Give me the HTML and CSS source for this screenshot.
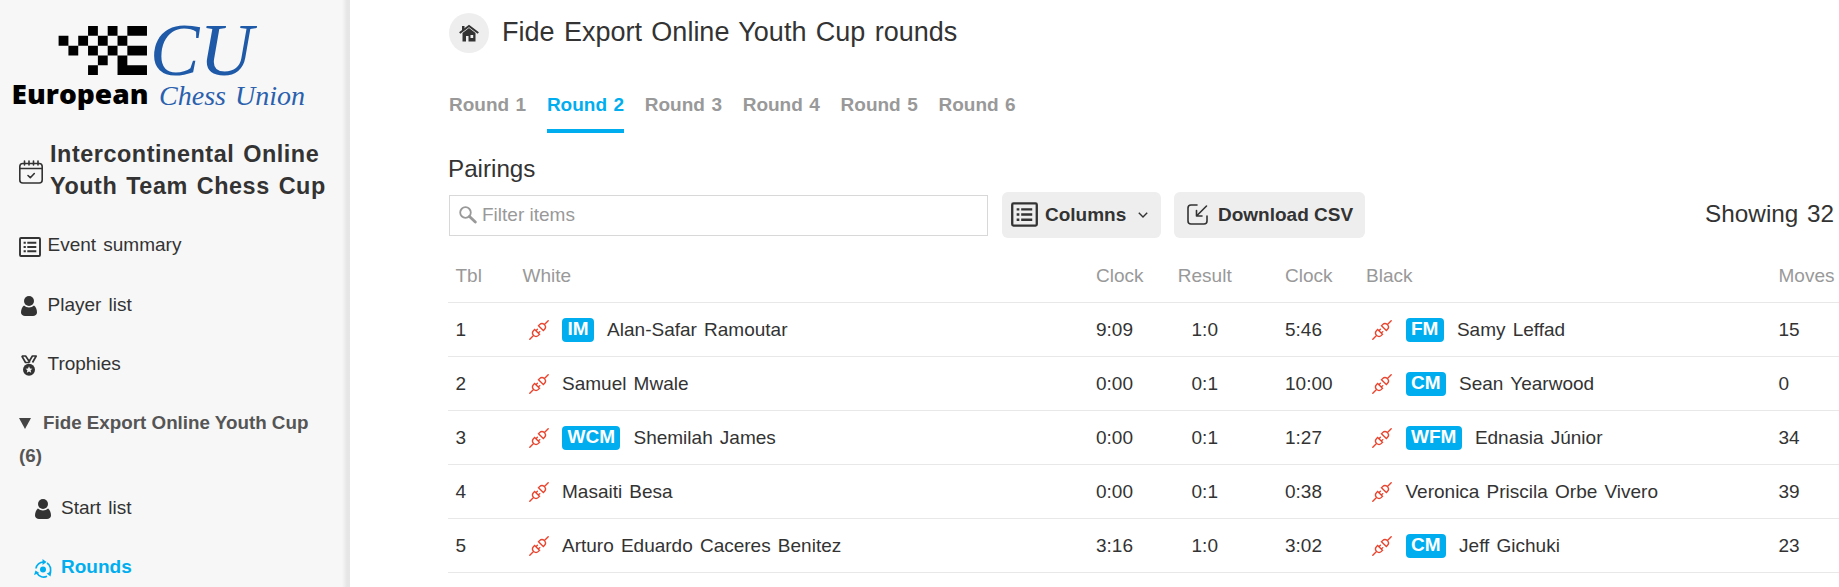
FILE: index.html
```html
<!DOCTYPE html>
<html lang="en">
<head>
    <meta charset="UTF-8">
    <meta name="viewport" content="width=device-width, initial-scale=1.0">
    <title>Fide Export Online Youth Cup rounds</title>
    <link rel="stylesheet" href="styles.css">
</head>
<body>
    <!-- shared icons -->
    <svg class="sprite" aria-hidden="true">
        <symbol id="i-list" viewBox="0 0 22 20">
            <rect x="1" y="1" width="20" height="18" rx="1" fill="none" stroke="currentColor" stroke-width="1.9"/>
            <path d="M4.6 5.8h2.2M8.3 5.8h9M4.6 10h2.2M8.3 10h9M4.6 14.3h2.2M8.3 14.3h9" fill="none" stroke="currentColor" stroke-width="1.9"/>
        </symbol>
        <symbol id="i-user" viewBox="0 0 16 20">
            <circle cx="8" cy="5" r="5" fill="currentColor"/>
            <path d="M3 9.6c2.600 2.600 7.400 2.600 10 0c2 1.200 3 4.200 3 7c0 2-2 3.400-4 3.400H4c-2 0-4-1.400-4-3.400c0-2.800 1-5.800 3-7z" fill="currentColor"/>
        </symbol>
        <symbol id="i-plug" viewBox="0 0 20 20">
            <g fill="none" stroke="#e8452f" stroke-width="1.4" stroke-linecap="round" transform="rotate(-45 10 10)">
                <path d="M-3 10H2.200M7.300 6.600H5.800a3.400 3.400 0 0 0 0 6.800H7.300zM7.300 8.300h2.100M7.300 11.700h2.100M12.700 6.600h1.500a3.400 3.400 0 0 1 0 6.800h-1.500zM17.800 10H23"/>
            </g>
        </symbol>
    </svg>

    <div class="page">
        <aside class="sidebar">
            <svg class="logo" width="305" height="118" viewBox="0 0 305 118">
                <g transform="translate(58.600 26) scale(9.820)">
                    <path d="M3 0h1v1H3zM5 0h1v1H5zM7 0h2v1H7zM0 1h1v1H0zM2 1h1v1H2zM4 1h1v1H4zM6 1h1v1H6zM1 2h1v1H1zM3 2h1v1H3zM5 2h1v1H5zM7 2h2v1H7zM4 3h1v1H4zM6 3h1v1H6zM3 4h1v1H3zM6 4h3v1H6z"/>
                </g>
                <text class="logo-cu" x="150" y="75" textLength="103" lengthAdjust="spacingAndGlyphs">CU</text>
                <text class="logo-name" x="11.500" y="104" textLength="137" lengthAdjust="spacingAndGlyphs">European</text>
                <text class="logo-union" x="159" y="104.500" textLength="146" lengthAdjust="spacingAndGlyphs">Chess Union</text>
            </svg>

            <div class="event">
                <svg class="cal" width="24" height="24" viewBox="0 0 24 24" fill="none" stroke="currentColor" stroke-width="1.6" stroke-linecap="round" stroke-linejoin="round">
                    <rect x=".800" y="3.500" width="22.400" height="19.500" rx="3"/>
                    <path d="M1 8.500h22M5.500 1v4M10 1v4M14.500 1v4M19 1v4M9 15.500l2.300 2.200 4-4.200"/>
                </svg>
                <h2>Intercontinental Online<br>Youth Team Chess Cup</h2>
            </div>

            <nav class="menu">
                <a><svg class="icon list"><use href="#i-list"/></svg>Event summary</a>
                <a><svg class="icon"><use href="#i-user"/></svg>Player list</a>
                <a>
                    <svg class="icon medal" viewBox="0 0 16 21" fill="none" stroke="currentColor">
                        <path d="M.800 1h3.800L9 7.500M.800 1L4.500 7.500h3L11.400 1h3.800l-3.700 6.500" stroke-width="1.700" stroke-linejoin="round"/>
                        <circle cx="8" cy="14.700" r="6" fill="currentColor" stroke="none"/>
                        <path d="M8 11.300l1 2.200 2.400.200-1.800 1.600.600 2.400L8 16.500l-2.200 1.200.600-2.400-1.800-1.600 2.400-.200z" fill="#f7f7f7" stroke="none"/>
                    </svg>Trophies
                </a>
            </nav>

            <div class="section"><span class="arrow"></span>Fide Export Online Youth Cup<br>(6)</div>

            <nav class="menu sub">
                <a><svg class="icon"><use href="#i-user"/></svg>Start list</a>
                <a class="active">
                    <svg class="icon" viewBox="0 0 18 20" fill="none" stroke="currentColor" stroke-width="1.700">
                        <circle cx="9" cy="10.500" r="3" fill="currentColor" stroke="none"/>
                        <path d="M2 9.500A7.500 7.500 0 0 1 9.500 3M13 4a7.500 7.500 0 0 1 2.500 10.500M13 17.200a7.500 7.500 0 0 1-10-3"/>
                        <path d="M8.500 0l4 3-4 3zM17.500 12.500l-1 5-3.800-3zM0 16l1.500-4.500 3.800 2.500z" fill="currentColor" stroke="none"/>
                    </svg>Rounds
                </a>
            </nav>
        </aside>

        <main>
            <header>
                <a class="home">
                    <svg width="20" height="20" viewBox="0 0 20 20">
                        <path d="M.700 10L10 3 19.300 10" fill="none" stroke="#333" stroke-width="2"/>
                        <path d="M3 3h2.500v3L3 8z" fill="#333"/>
                        <path d="M3.500 10l6.500-5 6.500 5v8.500h-7V13H7v5.500H3.500zM11.500 12v3h2.700v-3z" fill="#333" fill-rule="evenodd"/>
                    </svg>
                </a>
                <h1>Fide Export Online Youth Cup rounds</h1>
            </header>

            <div class="tabs">
                <a>Round 1</a>
                <a class="active">Round 2</a>
                <a>Round 3</a>
                <a>Round 4</a>
                <a>Round 5</a>
                <a>Round 6</a>
            </div>

            <h3>Pairings</h3>

            <div class="toolbar">
                <label class="filter">
                    <svg width="18" height="18" viewBox="0 0 18 18" fill="none" stroke="#999">
                        <circle cx="6.500" cy="6.500" r="5.300" stroke-width="1.800"/>
                        <path d="M10.500 10.500l5.800 5.500" stroke-width="2.800" stroke-linecap="round"/>
                    </svg>
                    <input type="text" placeholder="Filter items">
                </label>
                <button class="columns" type="button">
                    <svg class="btn-list"><use href="#i-list"/></svg>Columns
                    <svg class="caret" width="10" height="6" viewBox="0 0 10 6" fill="none" stroke="currentColor" stroke-width="1.400"><path d="M.800.700L5 4.900 9.200.700"/></svg>
                </button>
                <button class="download" type="button">
                    <svg width="21" height="21" viewBox="0 0 21 21" fill="none" stroke="currentColor" stroke-width="1.600" stroke-linecap="round" stroke-linejoin="round">
                        <path d="M10 1H4a3 3 0 0 0-3 3v13a3 3 0 0 0 3 3h13a3 3 0 0 0 3-3v-5M19.500 2L9.500 12M9.500 6.500V12H15"/>
                    </svg>Download CSV
                </button>
                <span class="showing">Showing 32</span>
            </div>

            <table>
                <colgroup>
                    <col class="c-tbl"><col class="c-white"><col class="c-clock"><col class="c-result"><col class="c-clock"><col class="c-black"><col class="c-moves">
                </colgroup>
                <thead>
                    <tr><th>Tbl</th><th>White</th><th>Clock</th><th class="res">Result</th><th>Clock</th><th>Black</th><th>Moves</th></tr>
                </thead>
                <tbody>
                    <tr>
                        <td>1</td>
                        <td><div class="player"><svg class="plug"><use href="#i-plug"/></svg><b>IM</b>Alan-Safar Ramoutar</div></td>
                        <td>9:09</td><td class="res">1:0</td><td>5:46</td>
                        <td><div class="player"><svg class="plug"><use href="#i-plug"/></svg><b>FM</b>Samy Leffad</div></td>
                        <td>15</td>
                    </tr>
                    <tr>
                        <td>2</td>
                        <td><div class="player"><svg class="plug"><use href="#i-plug"/></svg>Samuel Mwale</div></td>
                        <td>0:00</td><td class="res">0:1</td><td>10:00</td>
                        <td><div class="player"><svg class="plug"><use href="#i-plug"/></svg><b>CM</b>Sean Yearwood</div></td>
                        <td>0</td>
                    </tr>
                    <tr>
                        <td>3</td>
                        <td><div class="player"><svg class="plug"><use href="#i-plug"/></svg><b>WCM</b>Shemilah James</div></td>
                        <td>0:00</td><td class="res">0:1</td><td>1:27</td>
                        <td><div class="player"><svg class="plug"><use href="#i-plug"/></svg><b>WFM</b>Ednasia Júnior</div></td>
                        <td>34</td>
                    </tr>
                    <tr>
                        <td>4</td>
                        <td><div class="player"><svg class="plug"><use href="#i-plug"/></svg>Masaiti Besa</div></td>
                        <td>0:00</td><td class="res">0:1</td><td>0:38</td>
                        <td><div class="player"><svg class="plug"><use href="#i-plug"/></svg>Veronica Priscila Orbe Vivero</div></td>
                        <td>39</td>
                    </tr>
                    <tr>
                        <td>5</td>
                        <td><div class="player"><svg class="plug"><use href="#i-plug"/></svg>Arturo Eduardo Caceres Benitez</div></td>
                        <td>3:16</td><td class="res">1:0</td><td>3:02</td>
                        <td><div class="player"><svg class="plug"><use href="#i-plug"/></svg><b>CM</b>Jeff Gichuki</div></td>
                        <td>23</td>
                    </tr>
                </tbody>
            </table>
        </main>
    </div>
</body>
</html>
```
FILE: styles.css
```css
* {
    box-sizing: border-box;
}
body {
    margin: 0;
    font-family: "Liberation Sans", Arial, sans-serif;
    font-size: 19px;
    line-height: 32.8px;
    word-spacing: 1.9px;
    color: #333;
    background: #fff;
    overflow: hidden;
}
svg {
    display: block;
    flex: none;
}
.sprite {
    position: absolute;
    width: 0;
    height: 0;
}
.page {
    display: flex;
    height: 587px;
}

/* sidebar */
.sidebar {
    flex: none;
    width: 350px;
    padding-left: 19px;
    background: linear-gradient(to right, #f7f7f7 342px, #e6e6e6 347px, #e6e6e6 350px);
}
.logo {
    margin-left: -19px;
    overflow: visible;
}
.logo-cu {
    font: italic 75px "Liberation Serif", serif;
    fill: #1f5aa8;
}
.logo-name {
    font: 800 26px "Open Sans", sans-serif;
}
.logo-union {
    font: italic 27px "Liberation Serif", serif;
    fill: #2a60ad;
}
.event {
    display: flex;
    align-items: center;
    gap: 7px;
    margin: 19.6px 0 26px;
}
.event .cal {
    margin-top: 3px;
}
.event h2 {
    margin: 0;
    font-size: 23.4px;
    letter-spacing: 0.55px;
    white-space: nowrap;
}
.menu {
    display: flex;
    flex-direction: column;
    gap: 26.6px;
}
.menu a {
    display: flex;
    align-items: center;
    gap: 8.5px;
}
.icon {
    width: 20px;
    height: 20px;
    margin-top: 2px;
}
.icon.list {
    width: 22px;
    margin-right: -2px;
}
.icon.medal {
    height: 21px;
}
.section {
    margin: 26px 0 19.4px;
    font-size: 18.8px;
    font-weight: bold;
    color: #555;
    word-spacing: 0;
    white-space: nowrap;
}
.arrow {
    display: inline-block;
    margin-right: 12px;
    border: 6px solid transparent;
    border-top: 11px solid #444;
    border-bottom: 0;
}
.menu.sub {
    padding-left: 14px;
}
.sub a {
    gap: 8px;
}
.menu .active {
    color: #00aeef;
    font-weight: bold;
}

/* content */
main {
    flex: 1;
    min-width: 0;
    padding-left: 98px;
}
header {
    display: flex;
    align-items: center;
    gap: 13px;
    height: 40px;
    margin: 13px 0 0 1px;
}
.home {
    display: flex;
    align-items: center;
    justify-content: center;
    width: 40px;
    height: 40px;
    border-radius: 50%;
    background: #eee;
}
h1 {
    margin: -2px 0 0;
    font-size: 27px;
    font-weight: normal;
}
.tabs {
    display: flex;
    gap: 20.700px;
    margin: 36px 0 0 1px;
    word-spacing: 1.200px;
}
.tabs a {
    height: 44px;
    font-weight: bold;
    color: #999;
}
.tabs .active {
    color: #00aeef;
    border-bottom: 4px solid #00aeef;
}
h3 {
    margin: 20px 0 6px;
    font-size: 24.200px;
    font-weight: normal;
}
.toolbar {
    display: flex;
    align-items: center;
    height: 46px;
    margin-left: 1px;
}
.filter {
    display: flex;
    align-items: center;
    gap: 5px;
    width: 539px;
    height: 41px;
    margin-top: 1px;
    padding-left: 9px;
    border: 1px solid #d8d8d8;
}
.filter input {
    flex: 1;
    padding: 0;
    border: 0;
    outline: 0;
    font: inherit;
    word-spacing: 0;
}
.filter input::placeholder {
    color: #999;
}
button {
    display: flex;
    align-items: center;
    height: 46px;
    border: 0;
    border-radius: 6px;
    background: #eee;
    color: #333;
    font: bold 19px "Liberation Sans", Arial, sans-serif;
    white-space: nowrap;
}
.columns {
    width: 159px;
    margin-left: 14px;
    padding: 0 0 0 9px;
}
.btn-list {
    width: 27px;
    height: 25px;
    margin-right: 7px;
}
.caret {
    margin-left: 12px;
}
.download {
    width: 191px;
    margin-left: 13px;
    padding: 0 0 0 13px;
}
.download svg {
    margin-right: 10px;
}
.showing {
    margin-left: auto;
    padding-right: 5px;
    font-size: 24.300px;
    white-space: nowrap;
}
table {
    width: 1400px;
    margin-top: 11px;
    table-layout: fixed;
    border-collapse: collapse;
}
.c-tbl { width: 67px; }
.c-white { width: 573.500px; }
.c-clock { width: 81px; }
.c-result { width: 108px; }
.c-black { width: 412.500px; }
th, td {
    height: 54px;
    padding: 1px 0 0 7.500px;
    border-bottom: 1px solid #e8e8e8;
    text-align: left;
    font-weight: normal;
}
th {
    padding-top: 2px;
    color: #999;
}
.res {
    padding-right: 45px;
    text-align: center;
}
.player {
    display: flex;
    align-items: center;
    white-space: nowrap;
}
.plug {
    width: 20px;
    height: 20px;
    margin: 0 13.500px 0 6px;
}
.player b {
    height: 24px;
    margin: -1px 13px 0 0;
    padding: 0 5.500px;
    border-radius: 4px;
    background: #00aeef;
    color: #fff;
    line-height: 22px;
}
```
